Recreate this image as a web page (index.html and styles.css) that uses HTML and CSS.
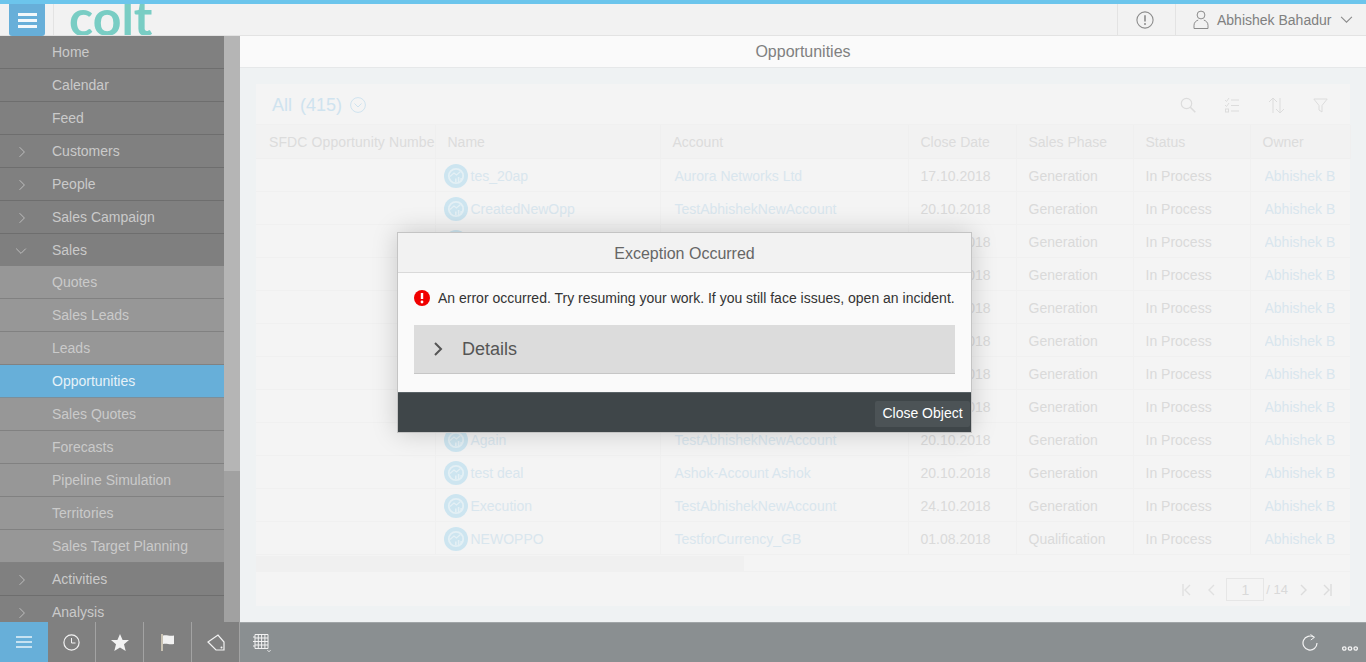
FILE: index.html
```html
<!DOCTYPE html>
<html lang="en">

<head>
  <meta charset="UTF-8">
  <title>Opportunities</title>
  <link rel="stylesheet" href="styles.css">
</head>

<body>
  <svg class="sprites" xmlns="http://www.w3.org/2000/svg">
    <symbol id="opp" viewBox="0 0 24 24">
      <circle cx="12" cy="12" r="12" fill="#cde5f0" />
      <circle cx="12" cy="12" r="7.2" fill="none" stroke="#e4f0f5" stroke-width="1.8" />
      <path d="M6 12.5l4-3.5 2.500 2 4-3.500" fill="none" stroke="#e4f0f5" stroke-width="1.200" />
      <path d="M11 18v-3.500h1.600V18zM13.800 18v-5h1.600v5zM16.400 17v-3h1.400v3z" fill="#e4f0f5" />
    </symbol>
    <symbol id="chev-right" viewBox="0 0 10 14">
      <path d="M2 1l6 6-6 6" fill="none" stroke="currentColor" />
    </symbol>
    <symbol id="chev-down" viewBox="0 0 14 10">
      <path d="M1 2l6 6 6-6" fill="none" stroke="currentColor" />
    </symbol>
  </svg>

  <header class="topbar">
    <button class="menu-btn"><span></span><span></span><span></span></button>
    <div class="logo-wrap"><span class="logo">colt</span></div>
    <div class="top-alert">
      <svg width="18" height="18" viewBox="0 0 20 20">
        <circle cx="10" cy="10" r="9" fill="none" stroke="#8c8c8c" stroke-width="1.2" />
        <path d="M10 4.6v7" stroke="#8c8c8c" stroke-width="1.8" />
        <circle cx="10" cy="14.4" r="1.1" fill="#8c8c8c" />
      </svg>
    </div>
    <div class="top-user">
      <svg width="16" height="19" viewBox="0 0 16 19">
        <circle cx="8" cy="5" r="3.9" fill="none" stroke="#8c8c8c" />
        <path d="M1 18.5v-3.2c0-3 2.4-4.8 4.2-5.2M15 18.5v-3.2c0-3-2.4-4.8-4.2-5.2M1 18.5h14" fill="none" stroke="#8c8c8c" />
      </svg>
      <span class="user-name">Abhishek Bahadur</span>
      <svg class="user-chev" width="13" height="9"><use href="#chev-down" /></svg>
    </div>
  </header>

  <div class="middle">
    <nav class="sidebar">
      <ul class="nav-list">
        <li class="nav-item">Home</li>
        <li class="nav-item">Calendar</li>
        <li class="nav-item">Feed</li>
        <li class="nav-item"><svg class="nav-arrow" width="8" height="12"><use href="#chev-right" /></svg>Customers</li>
        <li class="nav-item"><svg class="nav-arrow" width="8" height="12"><use href="#chev-right" /></svg>People</li>
        <li class="nav-item"><svg class="nav-arrow" width="8" height="12"><use href="#chev-right" /></svg>Sales Campaign</li>
        <li class="nav-item open"><svg class="nav-arrow down" width="12" height="8"><use href="#chev-down" /></svg>Sales</li>
        <li class="nav-item sub">Quotes</li>
        <li class="nav-item sub">Sales Leads</li>
        <li class="nav-item sub">Leads</li>
        <li class="nav-item sub active">Opportunities</li>
        <li class="nav-item sub">Sales Quotes</li>
        <li class="nav-item sub">Forecasts</li>
        <li class="nav-item sub">Pipeline Simulation</li>
        <li class="nav-item sub">Territories</li>
        <li class="nav-item sub">Sales Target Planning</li>
        <li class="nav-item"><svg class="nav-arrow" width="8" height="12"><use href="#chev-right" /></svg>Activities</li>
        <li class="nav-item"><svg class="nav-arrow" width="8" height="12"><use href="#chev-right" /></svg>Analysis</li>
      </ul>
      <div class="side-scroll"><div class="side-thumb"></div></div>
    </nav>

    <main class="content">
      <div class="page-title">Opportunities</div>
      <div class="page-body">
        <section class="card">
          <div class="card-head">
            <span class="view-name">All</span>
            <span class="view-count">(415)</span>
            <svg class="view-icon" width="16" height="16" viewBox="0 0 16 16">
              <circle cx="8" cy="8" r="7.4" fill="none" stroke="#cfe3ef" />
              <path d="M4.5 6.5L8 10l3.5-3.5" fill="none" stroke="#cfe3ef" />
            </svg>
            <div class="card-tools">
              <svg width="16" height="16" viewBox="0 0 16 16">
                <circle cx="6.5" cy="6.5" r="5.2" fill="none" stroke="#dcdcdc" stroke-width="1.2" />
                <path d="M10.3 10.3l5 5" stroke="#dcdcdc" stroke-width="1.6" />
              </svg>
              <svg width="16" height="16" viewBox="0 0 16 16">
                <path d="M1 3l1.5 1.5L5 1M1 8l1.5 1.5L5 6M7 3h8M7 8.500h8M7 14h8" fill="none" stroke="#dcdcdc" />
                <rect x="1.500" y="12" width="3" height="3" fill="none" stroke="#dcdcdc" />
              </svg>
              <svg width="17" height="17" viewBox="0 0 17 17">
                <path d="M5 16V1M1 5l4-4 4 4M12 1v15M8 12l4 4 4-4" fill="none" stroke="#dcdcdc" />
              </svg>
              <svg width="15" height="15" viewBox="0 0 15 15">
                <path d="M.8 1h13.400L9 7.500V14l-3-2V7.500z" fill="none" stroke="#dcdcdc" />
              </svg>
            </div>
          </div>

          <table class="opp-table">
            <colgroup>
              <col class="c-sfdc"><col class="c-name"><col class="c-account"><col class="c-date"><col class="c-phase"><col class="c-status"><col class="c-owner">
            </colgroup>
            <thead>
              <tr>
                <th>SFDC Opportunity Number</th><th>Name</th><th>Account</th><th>Close Date</th><th>Sales Phase</th><th>Status</th><th>Owner</th>
              </tr>
            </thead>
            <tbody>
              <tr>
                <td></td>
                <td class="name"><svg class="opp-icon"><use href="#opp" /></svg>tes_20ap</td>
                <td class="link">Aurora Networks Ltd</td>
                <td>17.10.2018</td><td>Generation</td><td>In Process</td><td class="owner"><span>Abhishek Bahadur</span></td>
              </tr>
              <tr>
                <td></td>
                <td class="name"><svg class="opp-icon"><use href="#opp" /></svg>CreatedNewOpp</td>
                <td class="link">TestAbhishekNewAccount</td>
                <td>20.10.2018</td><td>Generation</td><td>In Process</td><td class="owner"><span>Abhishek Bahadur</span></td>
              </tr>
              <tr>
                <td></td><td class="name"><svg class="opp-icon"><use href="#opp" /></svg></td><td class="link"></td>
                <td>20.10.2018</td><td>Generation</td><td>In Process</td><td class="owner"><span>Abhishek Bahadur</span></td>
              </tr>
              <tr>
                <td></td><td class="name"><svg class="opp-icon"><use href="#opp" /></svg></td><td class="link"></td>
                <td>20.10.2018</td><td>Generation</td><td>In Process</td><td class="owner"><span>Abhishek Bahadur</span></td>
              </tr>
              <tr>
                <td></td><td class="name"><svg class="opp-icon"><use href="#opp" /></svg></td><td class="link"></td>
                <td>20.10.2018</td><td>Generation</td><td>In Process</td><td class="owner"><span>Abhishek Bahadur</span></td>
              </tr>
              <tr>
                <td></td><td class="name"><svg class="opp-icon"><use href="#opp" /></svg></td><td class="link"></td>
                <td>20.10.2018</td><td>Generation</td><td>In Process</td><td class="owner"><span>Abhishek Bahadur</span></td>
              </tr>
              <tr>
                <td></td><td class="name"><svg class="opp-icon"><use href="#opp" /></svg></td><td class="link"></td>
                <td>20.10.2018</td><td>Generation</td><td>In Process</td><td class="owner"><span>Abhishek Bahadur</span></td>
              </tr>
              <tr>
                <td></td><td class="name"><svg class="opp-icon"><use href="#opp" /></svg></td><td class="link"></td>
                <td>20.10.2018</td><td>Generation</td><td>In Process</td><td class="owner"><span>Abhishek Bahadur</span></td>
              </tr>
              <tr>
                <td></td>
                <td class="name"><svg class="opp-icon"><use href="#opp" /></svg>Again</td>
                <td class="link">TestAbhishekNewAccount</td>
                <td>20.10.2018</td><td>Generation</td><td>In Process</td><td class="owner"><span>Abhishek Bahadur</span></td>
              </tr>
              <tr>
                <td></td>
                <td class="name"><svg class="opp-icon"><use href="#opp" /></svg>test deal</td>
                <td class="link">Ashok-Account Ashok</td>
                <td>20.10.2018</td><td>Generation</td><td>In Process</td><td class="owner"><span>Abhishek Bahadur</span></td>
              </tr>
              <tr>
                <td></td>
                <td class="name"><svg class="opp-icon"><use href="#opp" /></svg>Execution</td>
                <td class="link">TestAbhishekNewAccount</td>
                <td>24.10.2018</td><td>Generation</td><td>In Process</td><td class="owner"><span>Abhishek Bahadur</span></td>
              </tr>
              <tr>
                <td></td>
                <td class="name"><svg class="opp-icon"><use href="#opp" /></svg>NEWOPPO</td>
                <td class="link">TestforCurrency_GB</td>
                <td>01.08.2018</td><td>Qualification</td><td>In Process</td><td class="owner"><span>Abhishek Bahadur</span></td>
              </tr>
            </tbody>
          </table>

          <div class="h-scroll"><div class="h-thumb"></div></div>

          <div class="pager">
            <svg width="9" height="12" viewBox="0 0 9 12"><path d="M1 0v12M8 1L3 6l5 5" fill="none" stroke="#e0e0e0" stroke-width="1.400" /></svg>
            <svg class="pg-prev" width="7" height="12" viewBox="0 0 7 12"><path d="M6 1L1 6l5 5" fill="none" stroke="#e0e0e0" stroke-width="1.400" /></svg>
            <span class="pg-box">1</span>
            <span class="pg-total">/ 14</span>
            <svg class="pg-next" width="7" height="12" viewBox="0 0 7 12"><path d="M1 1l5 5-5 5" fill="none" stroke="#dcdcdc" stroke-width="1.400" /></svg>
            <svg width="9" height="12" viewBox="0 0 9 12"><path d="M8 0v12M1 1l5 5-5 5" fill="none" stroke="#dcdcdc" stroke-width="1.400" /></svg>
          </div>
        </section>
      </div>
    </main>
  </div>

  <footer class="bottombar">
    <div class="dock">
      <button class="dock-btn current">
        <svg width="16" height="12" viewBox="0 0 16 12"><path d="M0 1h16M0 6h16M0 11h16" stroke="#e8f3f9" stroke-width="1.600" /></svg>
      </button>
      <button class="dock-btn">
        <svg width="17" height="17" viewBox="0 0 17 17"><circle cx="8.500" cy="8.500" r="7.600" fill="none" stroke="#f2f2f2" stroke-width="1.200" /><path d="M8.500 4v5h4" fill="none" stroke="#f2f2f2" /></svg>
      </button>
      <button class="dock-btn">
        <svg width="18" height="17" viewBox="0 0 18 17"><path d="M9 0l2.600 6H18l-5 4.300L14.700 17 9 13.400 3.300 17 5 10.300 0 6h6.400z" fill="#f2f2f2" /></svg>
      </button>
      <button class="dock-btn">
        <svg width="14" height="17" viewBox="0 0 14 17"><path d="M1 0v17" stroke="#e9dfc8" stroke-width="1.400" /><path d="M2 1.500c4-1 6 1 11 0v8.500c-5 1-7-1-11 0z" fill="#f2f2f2" /></svg>
      </button>
      <button class="dock-btn">
        <svg width="18" height="17" viewBox="0 0 18 17"><path d="M1 8l10-7 6 7v8H9z" fill="none" stroke="#f2f2f2" stroke-width="1.200" /><circle cx="14.500" cy="13.500" r="1" fill="#f2f2f2" /></svg>
      </button>
    </div>
    <div class="bottom-rest">
      <svg class="grid-icon" width="20" height="19" viewBox="0 0 20 19">
        <path d="M3 1.500h13M3 5h13M3 8.500h13M3 12h13M3 15.500h13M3 1.500v14M6.300 1.500v14M9.600 1.500v14M12.900 1.500v14M16 1.500v14" fill="none" stroke="#f2f2f2" />
        <path d="M1 4h2M1 8.500h2M1 13h2" stroke="#f2f2f2" />
        <path d="M15.500 17.200l1.500 1.500 1.500-1.500" fill="none" stroke="#f2f2f2" />
      </svg>
      <div class="bottom-right">
        <svg width="16" height="17" viewBox="0 0 16 17">
          <path d="M12 3.300A7 7 0 1 0 15 9" fill="none" stroke="#f2f2f2" stroke-width="1.200" />
          <path d="M8.500 0.500L12.500 3.300 8.800 6" fill="none" stroke="#f2f2f2" />
        </svg>
        <svg width="16" height="5" viewBox="0 0 16 5">
          <circle cx="2.300" cy="2.500" r="1.700" fill="none" stroke="#f2f2f2" stroke-width="1.300" />
          <circle cx="8" cy="2.500" r="1.700" fill="none" stroke="#f2f2f2" stroke-width="1.300" />
          <circle cx="13.700" cy="2.500" r="1.700" fill="none" stroke="#f2f2f2" stroke-width="1.300" />
        </svg>
      </div>
    </div>
  </footer>

  <div class="dialog">
    <div class="dialog-head">Exception Occurred</div>
    <div class="dialog-body">
      <p class="dialog-msg">
        <svg width="16" height="16" viewBox="0 0 16 16">
          <circle cx="8" cy="8" r="8" fill="#f00000" />
          <path d="M8 3v6" stroke="#fff" stroke-width="2.400" />
          <circle cx="8" cy="12" r="1.400" fill="#fff" />
        </svg>
        An error occurred. Try resuming your work. If you still face issues, open an incident.
      </p>
      <div class="details">
        <svg width="10" height="14"><use href="#chev-right" /></svg>
        <span>Details</span>
      </div>
    </div>
    <div class="dialog-foot">
      <button class="close-btn">Close Object</button>
    </div>
  </div>
</body>

</html>
```

FILE: styles.css
```css
* {
  box-sizing: border-box;
}
html, body {
  margin: 0;
  padding: 0;
  height: 100%;
}
body {
  position: relative;
  display: flex;
  flex-direction: column;
  height: 662px;
  overflow: hidden;
  font-family: "Liberation Sans", Arial, sans-serif;
  font-size: 14px;
  background: #eff2f3;
}
.sprites {
  display: none;
}
button {
  font-family: inherit;
  border: 0;
  padding: 0;
}

/* top bar */
.topbar {
  flex: none;
  display: flex;
  height: 36px;
  border-top: 4px solid #6cc5ec;
  border-bottom: 1px solid #e3e3e3;
  background: #f2f2f2;
}
.menu-btn {
  width: 36px;
  height: 32px;
  margin-left: 9px;
  display: flex;
  flex-direction: column;
  align-items: center;
  justify-content: center;
  gap: 3px;
  background: #67afd9;
  border-radius: 0 0 3px 3px;
}
.menu-btn span {
  display: block;
  width: 19px;
  height: 3px;
  background: #f2f8fb;
}
.logo-wrap {
  margin-left: 8px;
  padding-left: 15px;
  width: 200px;
  height: 31px;
  border-left: 1px solid #e3e3e3;
  overflow: hidden;
}
.logo {
  display: block;
  margin-top: -18px;
  font-family: Lato, sans-serif;
  font-weight: bold;
  font-size: 50px;
  line-height: 62px;
  color: #79cdc4;
}
.top-alert {
  margin-left: auto;
  width: 58px;
  padding-right: 4px;
  border-left: 1px solid #e3e3e3;
  display: flex;
  align-items: center;
  justify-content: center;
}
.top-user {
  width: 191px;
  padding-left: 17px;
  border-left: 1px solid #e3e3e3;
  display: flex;
  align-items: center;
  color: #808080;
}
.user-name {
  margin-left: 8px;
}
.user-chev {
  margin-left: 9px;
  color: #8c8c8c;
  stroke-width: 1.2;
}

/* sidebar */
.middle {
  flex: 1;
  display: flex;
  min-height: 0;
}
.sidebar {
  flex: none;
  width: 240px;
  display: flex;
  overflow: hidden;
}
.nav-list {
  flex: none;
  width: 224px;
  margin: 0;
  padding: 0;
  list-style: none;
  overflow: hidden;
  background: #808080;
}
.nav-item {
  position: relative;
  height: 33px;
  padding-left: 52px;
  line-height: 32px;
  color: #cacaca;
  background: #808080;
  border-bottom: 1px solid #6e6e6e;
}
.nav-item.open {
  height: 32px;
  background: #7f7f7f;
  border-bottom: 0;
}
.nav-item.sub {
  background: #979797;
  border-bottom-color: #818181;
}
.nav-item.active {
  background: #67afd9;
  color: #e6f2f8;
  border-bottom-color: #7b8f9b;
}
.nav-arrow {
  position: absolute;
  left: 18px;
  top: 11px;
  color: #c0c0c0;
  stroke-width: 1.2;
}
.nav-arrow.down {
  left: 15px;
  top: 13px;
}
.side-scroll {
  flex: none;
  width: 16px;
  background: #a1a1a1;
}
.side-thumb {
  height: 435px;
  background: #b5b5b5;
}

/* main area */
.content {
  flex: 1;
  display: flex;
  flex-direction: column;
  min-width: 0;
}
.page-title {
  flex: none;
  height: 32px;
  line-height: 31px;
  text-align: center;
  font-size: 16px;
  color: #808080;
  background: #fafafa;
  border-bottom: 1px solid #e6e8e9;
}
.page-body {
  flex: 1;
  padding: 16px;
  min-height: 0;
}
.card {
  height: 522px;
  display: flex;
  flex-direction: column;
  background: #f4f4f4;
}
.card-head {
  flex: none;
  height: 41px;
  padding: 2px 15px 0 16px;
  display: flex;
  align-items: center;
  font-size: 18px;
  color: #cfe3ef;
  border-bottom: 1px solid #f0f0f0;
}
.view-count {
  margin-left: 8px;
}
.view-icon {
  margin-left: 8px;
}
.card-tools {
  margin-left: auto;
  margin-right: 7px;
  display: flex;
  align-items: center;
  gap: 28px;
}

/* table */
.opp-table {
  flex: none;
  width: 1094px;
  table-layout: fixed;
  border-collapse: collapse;
}
.c-sfdc { width: 179px; }
.c-name { width: 225px; }
.c-account { width: 248px; }
.c-date { width: 108px; }
.c-phase { width: 117px; }
.c-status { width: 117px; }
.c-owner { width: 100px; }
.opp-table th {
  height: 33px;
  padding: 2px 0 0 12px;
  font-weight: normal;
  text-align: left;
  color: #dcdcdc;
  background: #f2f2f2;
  white-space: nowrap;
  overflow: hidden;
  border-right: 1px solid #efefef;
  border-bottom: 1px solid #efefef;
}
.opp-table th:first-child {
  padding-left: 13px;
  letter-spacing: .1px;
}
.opp-table td {
  height: 33px;
  padding: 2px 0 0 12px;
  color: #dadada;
  white-space: nowrap;
  overflow: hidden;
  border-right: 1px solid #f0f0f0;
  border-bottom: 1px solid #f0f0f0;
}
.opp-table td.name {
  padding-left: 8px;
  color: #d9e6ee;
}
.opp-table td.link {
  padding-left: 14px;
  color: #d9e6ee;
}
.opp-table td.owner {
  padding-left: 14px;
  border-right: 0;
  color: #d9e6ee;
}
.owner span {
  display: block;
  width: 70px;
  overflow: hidden;
}
.opp-icon {
  width: 24px;
  height: 24px;
  margin-right: 3px;
  vertical-align: -7px;
}
.h-scroll {
  flex: none;
  height: 16px;
  margin-top: 1px;
  background: #f4f4f4;
  border-bottom: 1px solid #f0f0f0;
}
.h-thumb {
  width: 488px;
  height: 15px;
  background: #f0f0f0;
}
.pager {
  flex: 1;
  padding: 2px 18px 0 0;
  display: flex;
  align-items: center;
  justify-content: flex-end;
  font-size: 14px;
  color: #d9d9d9;
}
.pg-prev {
  margin-left: 17px;
}
.pg-box {
  width: 38px;
  height: 23px;
  margin-left: 11px;
  line-height: 22px;
  text-align: center;
  border: 1px solid #e6e6e6;
}
.pg-total {
  margin-left: 2px;
  font-size: 13px;
}
.pg-next {
  margin-left: 12px;
  margin-right: 16px;
}

/* bottom bar */
.bottombar {
  flex: none;
  height: 40px;
  display: flex;
  background: #8a8f91;
}
.dock {
  flex: none;
  width: 240px;
  display: flex;
  background: #808080;
}
.dock-btn {
  width: 48px;
  display: flex;
  align-items: center;
  justify-content: center;
  background: transparent;
  border-right: 1px solid #a3a3a3;
}
.dock-btn.current {
  background: #67afd9;
  border-right: 0;
}
.bottom-rest {
  flex: 1;
  display: flex;
  align-items: center;
  padding-left: 12px;
  border-top: 1px solid #a0a5a7;
}
.bottom-right {
  margin-left: auto;
  margin-right: 8px;
  display: flex;
  align-items: center;
  gap: 24px;
}
.bottom-right svg:last-child {
  margin-top: 12px;
}

/* error dialog, sits over the whole page */
.dialog {
  position: absolute;
  left: 397px;
  top: 232px;
  width: 575px;
  height: 201px;
  display: flex;
  flex-direction: column;
  background: #fafafa;
  border: 1px solid #c4c4c4;
  box-shadow: 0 0 24px rgba(0, 0, 0, .18);
}
.dialog-head {
  flex: none;
  height: 40px;
  line-height: 41px;
  text-align: center;
  font-size: 16px;
  color: #666;
  background: #f2f2f2;
  border-bottom: 1px solid #d9d9d9;
}
.dialog-body {
  flex: 1;
  padding: 0 16px;
}
.dialog-msg {
  margin: 0 0 2px;
  height: 50px;
  display: flex;
  align-items: center;
  gap: 8px;
  color: #333;
}
.details {
  height: 49px;
  padding-left: 19px;
  display: flex;
  align-items: center;
  gap: 19px;
  font-size: 18px;
  color: #555;
  background: #dcdcdc;
  border-bottom: 1px solid #c6c6c6;
  stroke-width: 2;
}
.dialog-foot {
  flex: none;
  height: 40px;
  padding: 8px 1px 0 0;
  display: flex;
  justify-content: flex-end;
  align-items: flex-start;
  background: #3f4649;
  border-top: 1px solid #5a6367;
}
.close-btn {
  width: 95px;
  height: 26px;
  padding-bottom: 2px;
  font-size: 14px;
  color: #fff;
  background: #4c5356;
  border-radius: 2px;
}
```
